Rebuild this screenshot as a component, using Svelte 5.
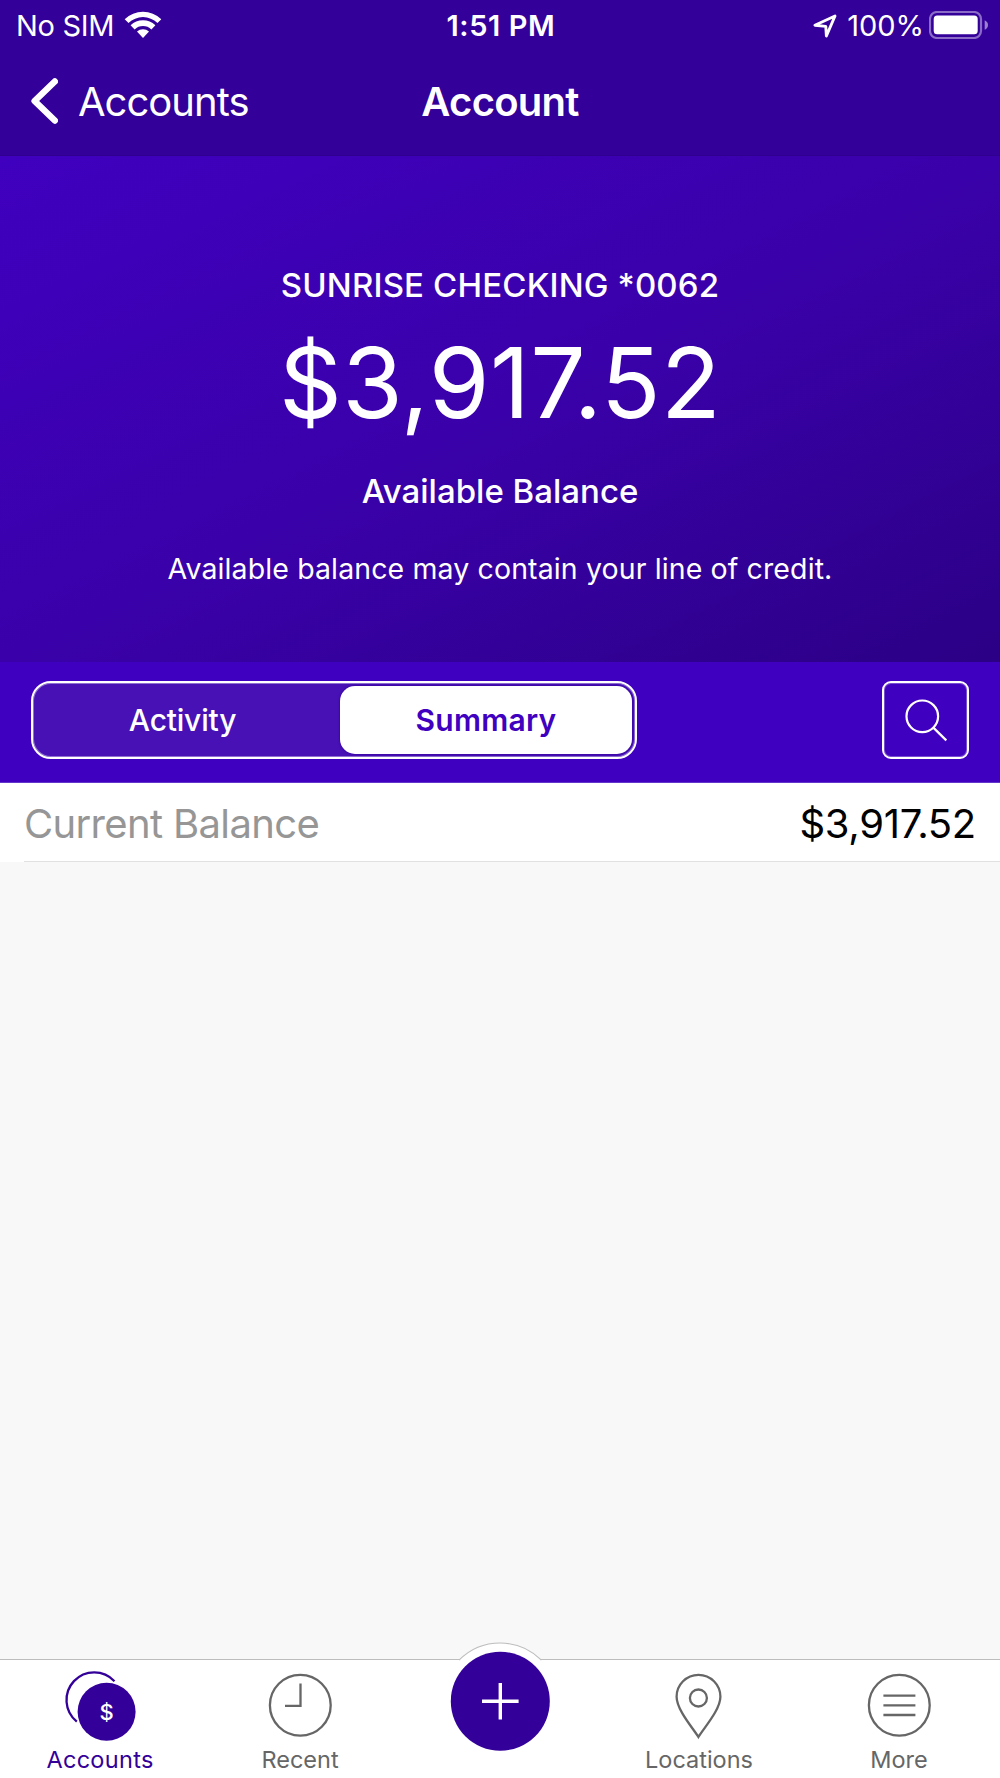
<script>
  let activeView = $state("summary");
  let activeTab = $state("accounts");

  const account = {
    name: "SUNRISE CHECKING *0062",
    available: "$3,917.52",
    current: "$3,917.52",
  };

  const views = [
    { id: "activity", label: "Activity" },
    { id: "summary", label: "Summary" },
  ];

  const tabs = [
    { id: "accounts", label: "Accounts" },
    { id: "recent", label: "Recent" },
    { id: "add", label: "" },
    { id: "locations", label: "Locations" },
    { id: "more", label: "More" },
  ];
</script>

<div class="screen">
  <header>
    <div class="status-bar">
      <div class="carrier">
        <span>No SIM</span>
        <svg width="38" height="28" viewBox="0 0 38 28" aria-hidden="true">
          <path d="M0.7 8.2 A26.5 26.5 0 0 1 37.3 8.2 L33.5 12 A20.8 20.8 0 0 0 4.5 12 Z" />
          <path d="M6.6 14.3 A18 18 0 0 1 31.4 14.3 L27.4 18.4 A12.2 12.2 0 0 0 10.6 18.4 Z" />
          <path d="M13 20.6 A9 9 0 0 1 25 20.6 L19 27 Z" />
        </svg>
      </div>
      <span class="time">1:51 PM</span>
      <div class="power">
        <svg class="arrow" width="24" height="24" viewBox="0 0 24 24" aria-hidden="true">
          <path d="M1.9 11.2 L22 2 L13.4 22 L12.8 12.4 Z" />
        </svg>
        <span>100%</span>
        <svg class="battery" width="60" height="28" viewBox="0 0 60 28" aria-hidden="true">
          <rect class="shell" x="1" y="1" width="51" height="26" rx="7" />
          <rect x="4.7" y="4.5" width="44" height="18.8" rx="3.5" />
          <path class="cap" d="M55.7 9.2 Q59 10.8 59 14 Q59 17.2 55.7 18.8 Z" />
        </svg>
      </div>
    </div>
    <div class="nav-bar">
      <button type="button" class="back">
        <svg width="28" height="48" viewBox="0 0 28 48" aria-hidden="true">
          <path d="M24.8 4.5 L4.6 24 L24.8 43.5" />
        </svg>
        <span>Accounts</span>
      </button>
      <h1>Account</h1>
    </div>
  </header>

  <section class="hero">
    <p class="name">{account.name}</p>
    <p class="amount">{account.available}</p>
    <p class="caption">Available Balance</p>
    <p class="note">Available balance may contain your line of credit.</p>
  </section>

  <div class="toolbar">
    <div class="segments">
      {#each views as view}
        <button type="button" class:active={view.id === activeView} onclick={() => (activeView = view.id)}>
          {view.label}
        </button>
      {/each}
    </div>
    <button type="button" class="search" aria-label="Search">
      <svg width="44" height="44" viewBox="0 0 44 44" aria-hidden="true">
        <circle cx="18.3" cy="18.3" r="15.8" />
        <path d="M29.6 29.9 L42.3 42.4" />
      </svg>
    </button>
  </div>

  <main>
    <div class="row">
      <span class="label">Current Balance</span>
      <span class="value">{account.current}</span>
    </div>
  </main>

  <nav class="tab-bar">
    {#each tabs as tab}
      {#if tab.id === "add"}
        <button type="button" class="add" aria-label="Add">
          <svg width="120" height="119" viewBox="0 0 120 119" aria-hidden="true">
            <path class="bump" d="M19 19.2 A58 58 0 0 1 101.4 19.2" />
            <circle cx="60.3" cy="60.2" r="49.5" />
            <path class="plus" d="M42 60.2 H78.6 M60.3 42 V78.4" />
          </svg>
        </button>
      {:else}
        <button type="button" class:active={tab.id === activeTab} onclick={() => (activeTab = tab.id)}>
          <svg class="icon" width="76" height="72" viewBox="0 0 76 72" aria-hidden="true">
            {#if tab.id === "accounts"}
              <path d="M52.5 11.2 A27.7 27.7 0 1 0 14.8 51.6" />
              <circle class="coin" cx="44.6" cy="41.8" r="29" />
              <text x="44.5" y="49.8" text-anchor="middle">$</text>
            {:else if tab.id === "recent"}
              <circle cx="38.3" cy="35.3" r="30.4" />
              <path d="M38.5 13.5 V35.9 H23" />
            {:else if tab.id === "locations"}
              <path d="M36.4 67 C31.2 58.3 14.6 39.8 14.6 26.7 A21.9 21.9 0 0 1 58.4 26.7 C58.4 39.8 41.6 58.3 36.4 67 Z" />
              <circle cx="36.4" cy="28" r="8.5" />
            {:else}
              <circle cx="37.3" cy="35.3" r="30.4" />
              <path d="M21.4 25.7 H53.4 M21.4 35.4 H53.4 M21.4 45 H53.4" />
            {/if}
          </svg>
          <span class:nudged={tab.id === "locations" || tab.id === "more"}>{tab.label}</span>
        </button>
      {/if}
    {/each}
  </nav>
</div>

<style>
  :global(body) {
    margin: 0;
  }

  .screen {
    width: 1000px;
    height: 1778px;
    display: flex;
    flex-direction: column;
    overflow: hidden;
    background: #f8f8f8;
    font-family: Inter, "Liberation Sans", sans-serif;
  }

  button {
    margin: 0;
    padding: 0;
    border: 0;
    background: none;
    color: inherit;
    font: inherit;
    cursor: pointer;
  }

  svg {
    display: block;
    flex: none;
  }

  p,
  h1 {
    margin: 0;
  }

  header {
    height: 156px;
    box-sizing: border-box;
    border-bottom: 1px solid #2f008f;
    background: #330099;
    color: #fff;
  }

  .status-bar {
    height: 50px;
    display: grid;
    grid-template-columns: 1fr auto 1fr;
    align-items: center;
    padding: 0 11px 0 16px;
    font-size: 29px;
    line-height: 50px;
  }

  .status-bar span {
    padding-top: 1px;
  }

  .status-bar svg {
    fill: #fff;
  }

  .carrier,
  .power {
    display: flex;
    align-items: center;
    letter-spacing: -0.3px;
  }

  .carrier svg {
    margin: -2px 0 0 10px;
  }

  .time {
    margin-right: 3px;
    font-weight: 600;
    letter-spacing: 0.6px;
  }

  .power {
    justify-content: flex-end;
    letter-spacing: 0;
  }

  .status-bar .arrow path {
    fill: none;
    stroke: #fff;
    stroke-width: 2.9;
    stroke-linejoin: round;
  }

  .arrow {
    margin-right: 10px;
  }

  .battery {
    margin: -1px 0 0 5px;
  }

  .status-bar .shell {
    fill: none;
    stroke: #8a6bc6;
    stroke-width: 2.2;
  }

  .cap {
    fill: #9a80ce;
  }

  .nav-bar {
    height: 102px;
    display: grid;
    grid-template-columns: 1fr auto 1fr;
    align-items: center;
    padding: 0 30px;
    font-size: 40px;
  }

  .back {
    display: flex;
    align-items: center;
    gap: 20px;
    letter-spacing: -0.98px;
  }

  .back path {
    fill: none;
    stroke: #fff;
    stroke-width: 6.4;
    stroke-linecap: round;
    stroke-linejoin: round;
  }

  h1 {
    font-size: 40px;
    font-weight: 600;
    letter-spacing: -0.75px;
  }

  .hero {
    height: 506px;
    box-sizing: border-box;
    padding-top: 109px;
    background: linear-gradient(to bottom right, #4000bf, #3a01aa 50%, #2b0085);
    color: #fff;
    text-align: center;
  }

  .name,
  .caption {
    font-size: 33px;
    font-weight: 500;
    line-height: 40px;
  }

  .name {
    letter-spacing: 0.16px;
  }

  .amount {
    margin: 23px 0 33px;
    font-size: 98px;
    line-height: 110px;
    letter-spacing: 0.37px;
  }

  .note {
    margin-top: 38px;
    font-size: 28.5px;
    line-height: 40px;
    letter-spacing: 0.12px;
  }

  .toolbar {
    height: 121px;
    box-sizing: border-box;
    display: flex;
    justify-content: space-between;
    align-items: flex-start;
    padding: 19px 31px 0;
    border-bottom: 1px solid #6235cb;
    background: #4000bf;
    color: #fff;
  }

  .segments {
    width: 606px;
    height: 78px;
    box-sizing: border-box;
    display: grid;
    grid-template-columns: 1fr 292px;
    padding: 3px;
    border: 2px solid #fff;
    border-radius: 20px;
    background: #4711b5;
    box-shadow: inset 0 0 0 1px rgba(255, 255, 255, 0.4);
    font-size: 30px;
    font-weight: 500;
  }

  .segments button {
    padding-right: 11px;
    letter-spacing: -0.2px;
  }

  .segments .active {
    padding: 0;
    border-radius: 15px;
    background: #fff;
    box-shadow: 0 0 2px 1px #3d08a6;
    color: #4000bf;
    font-weight: 600;
    letter-spacing: 0.25px;
  }

  .search {
    width: 87px;
    height: 78px;
    box-sizing: border-box;
    display: flex;
    justify-content: center;
    align-items: center;
    border: 2px solid #fff;
    border-radius: 9px;
    box-shadow: inset 0 0 0 1px rgba(255, 255, 255, 0.3);
  }

  .search svg {
    fill: none;
    stroke: #fff;
    stroke-width: 2.2;
  }

  main {
    flex: 1;
  }

  .row {
    height: 79px;
    box-sizing: border-box;
    display: flex;
    justify-content: space-between;
    align-items: center;
    padding: 2px 24px 0;
    background: linear-gradient(#e1e1e1, #e1e1e1) 24px 100% / 100% 1px no-repeat #fff;
    font-size: 40px;
  }

  .label {
    color: #969696;
    letter-spacing: -0.65px;
  }

  .value {
    color: #000;
    letter-spacing: -0.28px;
  }

  .tab-bar {
    height: 119px;
    box-sizing: border-box;
    display: grid;
    grid-template-columns: repeat(5, 1fr);
    border-top: 1px solid #bdbdbd;
    background: #fff;
    color: #666;
    font-size: 23.5px;
    letter-spacing: 0.75px;
  }

  .tab-bar button {
    display: flex;
    flex-direction: column;
    align-items: center;
    padding-top: 10px;
  }

  .tab-bar span {
    margin-top: 5px;
    line-height: 26px;
  }

  .tab-bar .nudged {
    margin-right: 2px;
  }

  .tab-bar .active {
    color: #330099;
    letter-spacing: 0.3px;
  }

  .icon {
    overflow: visible;
    fill: none;
    stroke: currentColor;
    stroke-width: 2.3;
  }

  .icon .coin {
    fill: currentColor;
    stroke: none;
  }

  .icon text {
    fill: #fff;
    stroke: none;
    font-size: 22px;
    font-weight: 500;
    letter-spacing: 0;
  }

  .tab-bar .add {
    margin-top: -19px;
    padding: 0;
  }

  .add circle {
    fill: #330099;
  }

  .bump {
    fill: #fff;
    stroke: #bdbdbd;
    stroke-width: 1.2;
  }

  .plus {
    stroke: #fff;
    stroke-width: 3.4;
  }
</style>
